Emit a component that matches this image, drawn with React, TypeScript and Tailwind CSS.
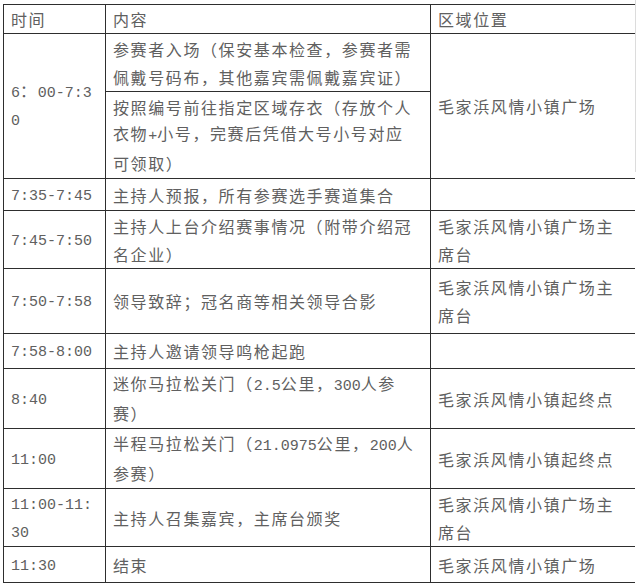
import React from "react";

const cjkCls = "font-['Noto_Sans_CJK_SC',sans-serif] text-[16px] tracking-[1.6px] leading-[28px]";
const monoCls = "font-['Liberation_Mono',monospace] text-[15px] tracking-normal leading-[28px]";

function T({ s }: { s: string }) {
  const parts = s.split(/([\x21-\x7e]+)/).filter((p) => p.length > 0);
  return (
    <>
      {parts.map((p, i) =>
        /^[\x21-\x7e]+$/.test(p) ? (
          <span key={i} className={monoCls}>
            {p}
          </span>
        ) : (
          <span key={i} className={cjkCls}>
            {p}
          </span>
        )
      )}
    </>
  );
}

function Lines({ lines }: { lines: string[] }) {
  return (
    <div className="flex flex-col">
      {lines.map((l, i) => (
        <div
          key={i}
          className="h-[28px] overflow-visible whitespace-nowrap leading-[28px] text-[16px] font-['Noto_Sans_CJK_SC',sans-serif] flex items-center"
        >
          <span>
            <T s={l} />
          </span>
        </div>
      ))}
    </div>
  );
}

const cellBase = "border-[1.5px] border-[#2e2e2e] pl-[7px] pr-1 py-0 align-middle text-left";
const cellLast = "border-y-[1.5px] border-l-[1.5px] border-r-0 border-[#2e2e2e] pl-[7px] pr-1 py-0 align-middle text-left";

type Row = {
  h: string;
  time: string[];
  content: string[];
  loc: string[];
};

const rows: Row[] = [
  { h: "h-[32px]", time: ["7:35-7:45"], content: ["主持人预报，所有参赛选手赛道集合"], loc: [] },
  { h: "h-[58px]", time: ["7:45-7:50"], content: ["主持人上台介绍赛事情况（附带介绍冠", "名企业）"], loc: ["毛家浜风情小镇广场主", "席台"] },
  { h: "h-[65px]", time: ["7:50-7:58"], content: ["领导致辞；冠名商等相关领导合影"], loc: ["毛家浜风情小镇广场主", "席台"] },
  { h: "h-[35px]", time: ["7:58-8:00"], content: ["主持人邀请领导鸣枪起跑"], loc: [] },
  { h: "h-[60px]", time: ["8:40"], content: ["迷你马拉松关门（2.5公里，300人参", "赛）"], loc: ["毛家浜风情小镇起终点"] },
  { h: "h-[60px]", time: ["11:00"], content: ["半程马拉松关门（21.0975公里，200人", "参赛）"], loc: ["毛家浜风情小镇起终点"] },
  { h: "h-[58px]", time: ["11:00-11:", "30"], content: ["主持人召集嘉宾，主席台颁奖"], loc: ["毛家浜风情小镇广场主", "席台"] },
  { h: "h-[36px]", time: ["11:30"], content: ["结束"], loc: ["毛家浜风情小镇广场"] },
];

export default function App() {
  return (
    <div className="relative w-[640px] h-[588px] bg-white overflow-hidden text-[#606060]">
      <div className="absolute left-[635px] top-0 w-px h-[172px] bg-[#dcdcdc]" />
      <div className="pl-[3px] pt-[4px]">
        <table className="border-collapse table-fixed w-[631px]">
          <colgroup>
            <col className="w-[102px]" />
            <col className="w-[325px]" />
            <col className="w-[204px]" />
          </colgroup>
          <tbody>
            <tr className="h-[29px]">
              <td className={cellBase}><Lines lines={["时间"]} /></td>
              <td className={cellBase}><Lines lines={["内容"]} /></td>
              <td className={cellLast}><Lines lines={["区域位置"]} /></td>
            </tr>
            <tr className="h-[58px]">
              <td className={cellBase} rowSpan={2}><Lines lines={["6：00-7:3", "0"]} /></td>
              <td className={cellBase}><Lines lines={["参赛者入场（保安基本检查，参赛者需", "佩戴号码布，其他嘉宾需佩戴嘉宾证）"]} /></td>
              <td className={cellLast} rowSpan={2}><Lines lines={["毛家浜风情小镇广场"]} /></td>
            </tr>
            <tr className="h-[87px]">
              <td className={cellBase}><Lines lines={["按照编号前往指定区域存衣（存放个人", "衣物+小号，完赛后凭借大号小号对应", "可领取）"]} /></td>
            </tr>
            {rows.map((r, i) => (
              <tr key={i} className={r.h}>
                <td className={cellBase}><Lines lines={r.time} /></td>
                <td className={cellBase}><Lines lines={r.content} /></td>
                <td className={cellLast}><Lines lines={r.loc} /></td>
              </tr>
            ))}
          </tbody>
        </table>
      </div>
    </div>
  );
}
